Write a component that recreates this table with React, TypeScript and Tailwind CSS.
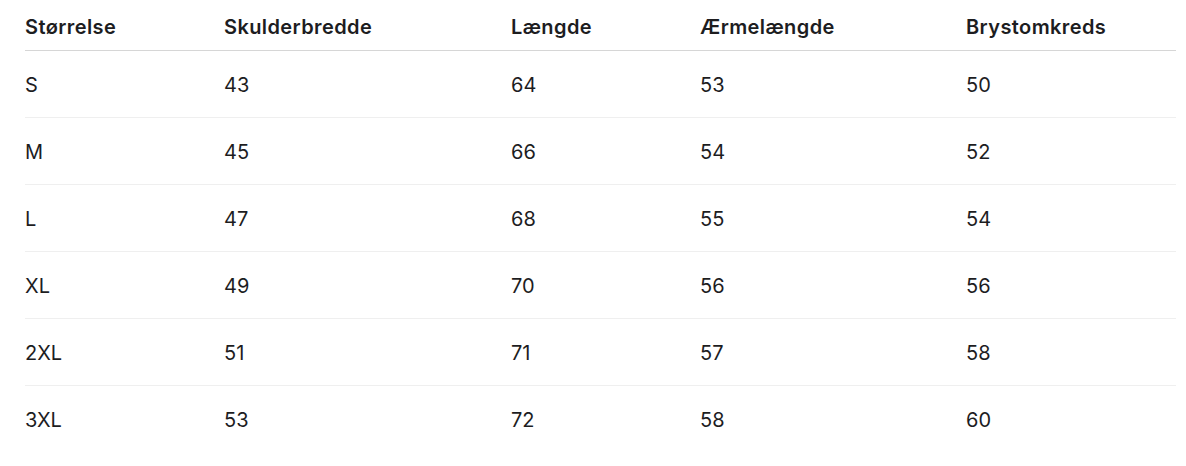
import React from 'react';

const headers = ['Størrelse', 'Skulderbredde', 'Længde', 'Ærmelængde', 'Brystomkreds'];

const rows: string[][] = [
  ['S', '43', '64', '53', '50'],
  ['M', '45', '66', '54', '52'],
  ['L', '47', '68', '55', '54'],
  ['XL', '49', '70', '56', '56'],
  ['2XL', '51', '71', '57', '58'],
  ['3XL', '53', '72', '58', '60'],
];

const colWidths = ['w-[199px]', 'w-[287px]', 'w-[189px]', 'w-[266px]', 'w-[210px]'];

const App: React.FC = () => {
  return (
    <div className="bg-white w-[1186px] h-[466px] pl-[25px] text-[#1d1d1f] font-['Inter',sans-serif]">
      <table className="w-[1151px] border-collapse table-fixed text-left">
        <colgroup>
          {colWidths.map((w, i) => (
            <col key={i} className={w} />
          ))}
        </colgroup>
        <thead>
          <tr className="border-b border-[#d6d6d6]">
            {headers.map((h) => (
              <th key={h} className="p-0 pt-[15px] pb-[11px] text-[20px] leading-[24px] font-semibold tracking-[0.02em]">
                {h}
              </th>
            ))}
          </tr>
        </thead>
        <tbody>
          {rows.map((row, i) => (
            <tr key={row[0]} className={i < rows.length - 1 ? 'border-b border-[#efefef]' : ''}>
              {row.map((cell, j) => (
                <td key={j} className="p-0 pt-[22px] pb-[20px] text-[20px] leading-[24px] font-normal">
                  {cell}
                </td>
              ))}
            </tr>
          ))}
        </tbody>
      </table>
    </div>
  );
};

export default App;
